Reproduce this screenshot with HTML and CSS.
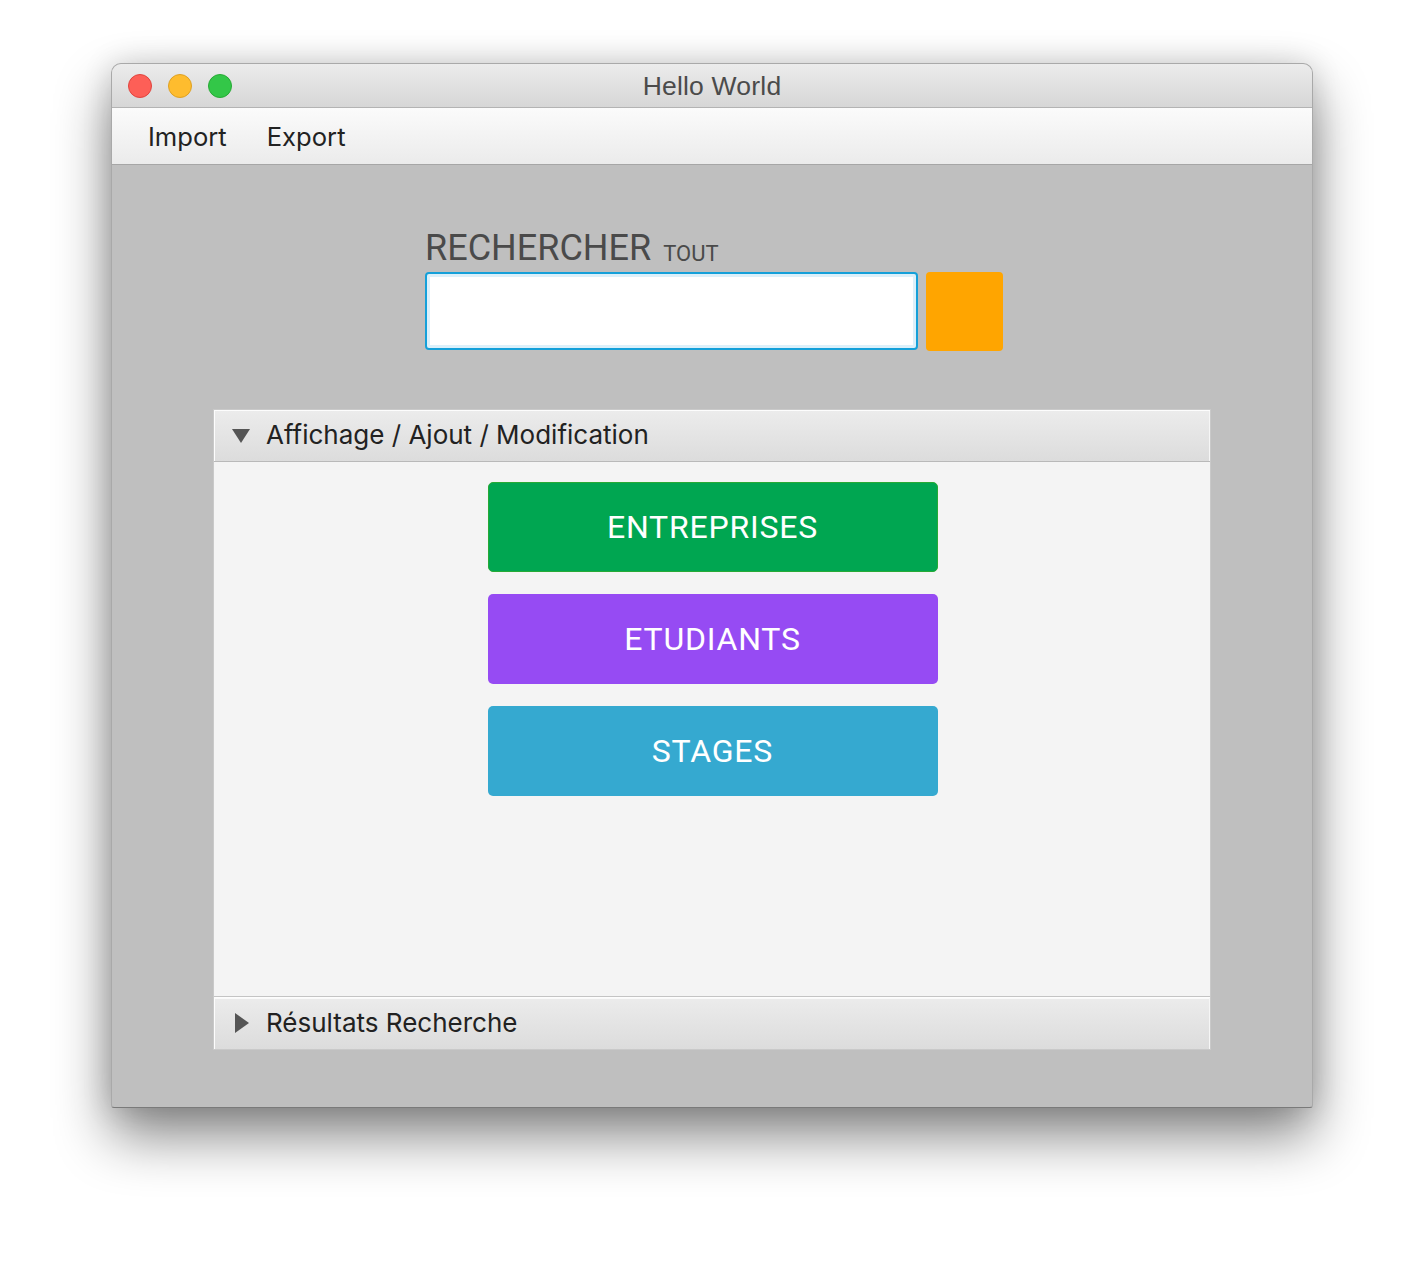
FILE: index.html
```html
<!DOCTYPE html>
<html lang="fr">
<head>
<meta charset="utf-8">
<title>Hello World</title>
<link rel="stylesheet" href="styles.css">
</head>
<body>
<div class="window">
  <div class="titlebar">
    <div class="lights">
      <span class="light red"></span>
      <span class="light yellow"></span>
      <span class="light green"></span>
    </div>
    <div class="title">Hello World</div>
  </div>
  <div class="menubar">
    <span class="menu-item">Import</span>
    <span class="menu-item">Export</span>
  </div>
  <div class="content">
    <div class="search">
      <div class="search-label">
        <span class="big">RECHERCHER</span>
        <span class="small">TOUT</span>
      </div>
      <div class="search-row">
        <div class="search-input"></div>
        <div class="search-btn"></div>
      </div>
    </div>
    <div class="accordion">
      <div class="pane-header open">
        <svg class="arrow" width="18" height="14" viewBox="0 0 18 14"><polygon points="0,0 18,0 9,14" fill="#555"/></svg>
        <span>Affichage / Ajout / Modification</span>
      </div>
      <div class="pane-body">
        <div class="btn green">ENTREPRISES</div>
        <div class="btn purple">ETUDIANTS</div>
        <div class="btn blue">STAGES</div>
      </div>
      <div class="pane-header closed">
        <svg class="arrow arrow-right" width="14" height="20" viewBox="0 0 14 20"><polygon points="0,0 14,10 0,20" fill="#555"/></svg>
        <span>Résultats Recherche</span>
      </div>
    </div>
  </div>
</div>
</body>
</html>
```
FILE: styles.css
```css
html, body {
  margin: 0;
  padding: 0;
  background: #ffffff;
}
body {
  font-family: "Inter", "Liberation Sans", sans-serif;
  padding-top: 63px;
  height: 1268px;
  box-sizing: border-box;
  overflow: hidden;
}
.window {
  width: 1202px;
  margin: 0 auto;
  box-sizing: border-box;
  border: 1px solid #a9a9a9;
  border-bottom-color: #7a7a7a;
  border-radius: 10px 10px 3px 3px;
  overflow: hidden;
  box-shadow: 0 28px 55px rgba(0, 0, 0, 0.48), 0 0 30px rgba(0, 0, 0, 0.14);
  background: #bfbfbf;
}
.titlebar {
  height: 43px;
  background: linear-gradient(#ececec, #d6d6d6);
  border-bottom: 1px solid #b3b3b3;
  display: flex;
  align-items: center;
  justify-content: center;
  position: relative;
}
.lights {
  position: absolute;
  left: 16px;
  top: 10px;
  display: flex;
  gap: 16px;
}
.light {
  width: 24px;
  height: 24px;
  border-radius: 50%;
  box-sizing: border-box;
}
.red { background: #fd5f57; border: 1px solid #e0443e; }
.yellow { background: #febc2e; border: 1px solid #dea123; }
.green { background: #33c748; border: 1px solid #27aa35; }
.title {
  font-family: "Liberation Sans", sans-serif;
  font-size: 26.5px;
  color: #4b4b4b;
  padding-top: 2px;
  letter-spacing: 0.2px;
}
.menubar {
  height: 56px;
  background: linear-gradient(#fbfbfb, #ebebeb);
  border-bottom: 1px solid #a6a6a6;
  display: flex;
  align-items: center;
  padding-left: 36px;
  gap: 40px;
}
.menu-item {
  font-size: 25.6px;
  color: #222;
  padding-top: 1px;
}
.content {
  height: 942px;
  box-sizing: border-box;
  padding-top: 65px;
  display: flex;
  flex-direction: column;
  align-items: center;
}
.search {
  width: 578px;
  flex: none;
  margin-left: 4px;
}
.search-label {
  font-family: "Roboto", sans-serif;
  color: #4a4a4a;
  line-height: 36px;
  height: 36px;
  display: flex;
  align-items: baseline;
  gap: 12px;
}
.big { font-size: 36px; }
.small { font-size: 22px; position: relative; top: 1px; }
.search-row {
  margin-top: 6px;
  display: flex;
  gap: 8px;
}
.search-input {
  flex: none;
  width: 493px;
  height: 78px;
  box-sizing: border-box;
  background: #fff;
  border: 2px solid #14a0d9;
  border-radius: 4px;
  box-shadow: inset 0 0 0 3px #dcf0fa;
}
.search-btn {
  flex: none;
  width: 77px;
  height: 79px;
  background: #ffa500;
  border-radius: 4px;
}
.accordion {
  margin-top: 58px;
  width: 998px;
  box-sizing: border-box;
  border: 1px solid #c9c9c9;
  background: #f4f4f4;
}
.pane-header {
  box-sizing: border-box;
  display: flex;
  align-items: center;
  background: linear-gradient(#ececec, #dcdcdc);
  box-shadow: inset 1px 1px 0 #fdfdfd, inset -1px 0 0 #f6f6f6;
  font-size: 26px;
  color: #222;
  padding-left: 18px;
}
.pane-header span {
  position: relative;
  top: -1px;
}
.pane-header.open {
  border-bottom: 1px solid #b9b9b9;
  height: 52px;
}
.pane-header.closed {
  border-top: 1px solid #c4c4c4;
  height: 53px;
  box-shadow: inset 1px 1px 0 #fdfdfd, inset -1px 0 0 #f6f6f6, inset 0 2px 0 #fafafa;
}
.arrow {
  margin-right: 16px;
  flex: none;
}
.arrow-right {
  margin-left: 3px;
  margin-right: 17px;
}
.pane-body {
  height: 534px;
  box-sizing: border-box;
  padding-top: 20px;
  display: flex;
  flex-direction: column;
  align-items: center;
  gap: 22px;
}
.btn {
  flex: none;
  width: 450px;
  height: 90px;
  box-sizing: border-box;
  border-radius: 5px;
  display: flex;
  align-items: center;
  justify-content: center;
  color: #fff;
  font-family: "Roboto", sans-serif;
  font-size: 32px;
  letter-spacing: 0.8px;
  margin-left: 1px;
}
.btn.green { background: #00a651; }
.btn.purple { background: #964bf3; }
.btn.blue { background: #35a9d0; }
```
